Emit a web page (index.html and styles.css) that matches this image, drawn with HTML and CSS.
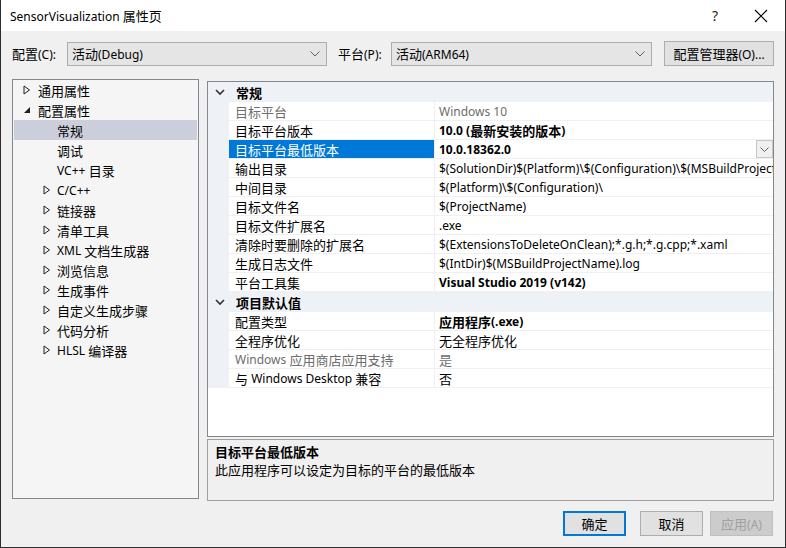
FILE: index.html
```html
<!DOCTYPE html>
<html lang="zh-CN">
<head>
<meta charset="UTF-8">
<title>SensorVisualization 属性页</title>
<link rel="stylesheet" href="styles.css">
</head>
<body>
<div class="window">
    <div class="titlebar">
        <span class="title">SensorVisualization <span class="zh">属性页</span></span>
        <span class="tb-help">?</span>
        <span class="tb-close">
            <svg width="14" height="14" viewBox="0 0 14 14"><path d="M1 1 L13 13 M13 1 L1 13" stroke="#000" stroke-width="1.1" fill="none"/></svg>
        </span>
    </div>

    <div class="toolbar">
        <label class="tb-label"><span class="zh">配置</span>(C):</label>
        <div class="combo combo-config">
            <span class="combo-text"><span class="zh">活动</span>(Debug)</span>
            <svg class="chev" width="10" height="6" viewBox="0 0 10 6"><path d="M0.5 0.5 L5 5 L9.5 0.5" stroke="#606060" fill="none"/></svg>
        </div>
        <label class="tb-label tb-label2"><span class="zh">平台</span>(P):</label>
        <div class="combo combo-platform">
            <span class="combo-text"><span class="zh">活动</span>(ARM64)</span>
            <svg class="chev" width="10" height="6" viewBox="0 0 10 6"><path d="M0.5 0.5 L5 5 L9.5 0.5" stroke="#606060" fill="none"/></svg>
        </div>
        <button class="btn btn-mgr"><span class="zh">配置管理器</span>(O)...</button>
    </div>

    <div class="main">
        <div class="tree">
            <div class="node lvl0"><svg class="tri" width="8" height="10" viewBox="0 0 8 10"><path d="M1 1 L6.5 5 L1 9 Z" fill="none" stroke="#1e1e1e"/></svg><span class="zh">通用属性</span></div>
            <div class="node lvl0"><svg class="tri" width="8" height="10" viewBox="0 0 8 10"><path d="M7 2 L7 8 L1 8 Z" fill="#1e1e1e"/></svg><span class="zh">配置属性</span></div>
            <div class="node lvl1 selected"><span class="zh">常规</span></div>
            <div class="node lvl1"><span class="zh">调试</span></div>
            <div class="node lvl1">VC++ <span class="zh">&nbsp;目录</span></div>
            <div class="node lvl1"><svg class="tri" width="8" height="10" viewBox="0 0 8 10"><path d="M1 1 L6.5 5 L1 9 Z" fill="none" stroke="#1e1e1e"/></svg>C/C++</div>
            <div class="node lvl1"><svg class="tri" width="8" height="10" viewBox="0 0 8 10"><path d="M1 1 L6.5 5 L1 9 Z" fill="none" stroke="#1e1e1e"/></svg><span class="zh">链接器</span></div>
            <div class="node lvl1"><svg class="tri" width="8" height="10" viewBox="0 0 8 10"><path d="M1 1 L6.5 5 L1 9 Z" fill="none" stroke="#1e1e1e"/></svg><span class="zh">清单工具</span></div>
            <div class="node lvl1"><svg class="tri" width="8" height="10" viewBox="0 0 8 10"><path d="M1 1 L6.5 5 L1 9 Z" fill="none" stroke="#1e1e1e"/></svg>XML&nbsp;<span class="zh">文档生成器</span></div>
            <div class="node lvl1"><svg class="tri" width="8" height="10" viewBox="0 0 8 10"><path d="M1 1 L6.5 5 L1 9 Z" fill="none" stroke="#1e1e1e"/></svg><span class="zh">浏览信息</span></div>
            <div class="node lvl1"><svg class="tri" width="8" height="10" viewBox="0 0 8 10"><path d="M1 1 L6.5 5 L1 9 Z" fill="none" stroke="#1e1e1e"/></svg><span class="zh">生成事件</span></div>
            <div class="node lvl1"><svg class="tri" width="8" height="10" viewBox="0 0 8 10"><path d="M1 1 L6.5 5 L1 9 Z" fill="none" stroke="#1e1e1e"/></svg><span class="zh">自定义生成步骤</span></div>
            <div class="node lvl1"><svg class="tri" width="8" height="10" viewBox="0 0 8 10"><path d="M1 1 L6.5 5 L1 9 Z" fill="none" stroke="#1e1e1e"/></svg><span class="zh">代码分析</span></div>
            <div class="node lvl1"><svg class="tri" width="8" height="10" viewBox="0 0 8 10"><path d="M1 1 L6.5 5 L1 9 Z" fill="none" stroke="#1e1e1e"/></svg>HLSL&nbsp;<span class="zh">编译器</span></div>
        </div>

        <div class="right">
            <div class="grid">
                <div class="section">
                    <svg class="sec-chev" width="10" height="7" viewBox="0 0 10 7"><path d="M1 1 L5 5 L9 1" stroke="#333" stroke-width="1.6" fill="none"/></svg>
                    <span class="zh">常规</span>
                </div>
                <div class="row disabled"><div class="gutter"></div><div class="name zh">目标平台</div><div class="val">Windows 10</div></div>
                <div class="row"><div class="gutter"></div><div class="name zh">目标平台版本</div><div class="val bold">10.0 (<span class="zh">最新安装的版本</span>)</div></div>
                <div class="row active"><div class="gutter"></div><div class="name zh">目标平台最低版本</div><div class="val bold">10.0.18362.0
                    <span class="dd"><svg width="9" height="5" viewBox="0 0 9 5"><path d="M0.5 0.5 L4.5 4.5 L8.5 0.5" stroke="#606060" fill="none"/></svg></span></div></div>
                <div class="row"><div class="gutter"></div><div class="name zh">输出目录</div><div class="val">$(SolutionDir)$(Platform)\$(Configuration)\$(MSBuildProjectName)\</div></div>
                <div class="row"><div class="gutter"></div><div class="name zh">中间目录</div><div class="val">$(Platform)\$(Configuration)\</div></div>
                <div class="row"><div class="gutter"></div><div class="name zh">目标文件名</div><div class="val">$(ProjectName)</div></div>
                <div class="row"><div class="gutter"></div><div class="name zh">目标文件扩展名</div><div class="val">.exe</div></div>
                <div class="row"><div class="gutter"></div><div class="name zh">清除时要删除的扩展名</div><div class="val">$(ExtensionsToDeleteOnClean);*.g.h;*.g.cpp;*.xaml</div></div>
                <div class="row"><div class="gutter"></div><div class="name zh">生成日志文件</div><div class="val">$(IntDir)$(MSBuildProjectName).log</div></div>
                <div class="row"><div class="gutter"></div><div class="name zh">平台工具集</div><div class="val bold">Visual Studio 2019 (v142)</div></div>
                <div class="section">
                    <svg class="sec-chev" width="10" height="7" viewBox="0 0 10 7"><path d="M1 1 L5 5 L9 1" stroke="#333" stroke-width="1.6" fill="none"/></svg>
                    <span class="zh">项目默认值</span>
                </div>
                <div class="row"><div class="gutter"></div><div class="name zh">配置类型</div><div class="val bold"><span class="zh">应用程序</span>(.exe)</div></div>
                <div class="row"><div class="gutter"></div><div class="name zh">全程序优化</div><div class="val zh">无全程序优化</div></div>
                <div class="row disabled"><div class="gutter"></div><div class="name">Windows&nbsp;<span class="zh">应用商店应用支持</span></div><div class="val zh">是</div></div>
                <div class="row"><div class="gutter"></div><div class="name"><span class="zh">与</span>&nbsp;Windows Desktop&nbsp;<span class="zh">兼容</span></div><div class="val zh">否</div></div>
            </div>
            <div class="desc">
                <div class="desc-title zh">目标平台最低版本</div>
                <div class="desc-text zh">此应用程序可以设定为目标的平台的最低版本</div>
            </div>
        </div>
    </div>

    <div class="footer">
        <button class="btn btn-ok"><span class="zh">确定</span></button>
        <button class="btn"><span class="zh">取消</span></button>
        <button class="btn btn-off"><span class="zh">应用</span>(A)</button>
    </div>
</div>
</body>
</html>
```

FILE: styles.css
```css
body {
    margin: 0;
    padding: 0;
    font-family: "Segoe UI", "Noto Sans", "Noto Sans CJK SC", sans-serif;
    font-size: 12px;
    color: #000;
    background-color: #f0f0f0;
}
/* Chinese glyphs render a bit larger than the Latin text */
.zh {
    font-size: 13px;
}
.window {
    width: 786px;
    height: 548px;
    box-sizing: border-box;
    border: 1px solid #2e2e2e;
    border-top: none;
    background-color: #f0f0f0;
    display: flex;
    flex-direction: column;
}
.titlebar {
    height: 31px;
    flex: none;
    background-color: #fff;
    display: flex;
    align-items: center;
    padding-left: 9px;
}
.title {
    flex: 1;
    font-size: 12px;
}
.tb-help {
    width: 46px;
    text-align: center;
    font-size: 14px;
    color: #222;
}
.tb-close {
    width: 46px;
    display: flex;
    justify-content: center;
    margin-right: 1px;
}
.toolbar {
    height: 48px;
    flex: none;
    display: flex;
    align-items: center;
    padding: 0 0 3px 11px;
    box-sizing: border-box;
}
.tb-label {
    width: 55px;
    flex: none;
}
.tb-label2 {
    width: 53px;
    margin-left: 11px;
}
.combo {
    height: 24px;
    flex: none;
    box-sizing: border-box;
    border: 1px solid #adadad;
    background-color: #e5e5e5;
    display: flex;
    align-items: center;
    padding: 0 6px 0 4px;
}
.combo-text {
    flex: 1;
}
.combo-config {
    width: 260px;
}
.combo-platform {
    width: 261px;
}
.btn {
    font-family: inherit;
    font-size: 12px;
    height: 25px;
    width: 63px;
    flex: none;
    border: 1px solid #adadad;
    background-color: #e1e1e1;
    color: #000;
    padding: 0;
}
.btn-mgr {
    width: 110px;
    margin-left: 12px;
}
.btn-ok {
    border: 2px solid #0078d7;
}
.btn-off {
    background-color: #cccccc;
    border-color: #bfbfbf;
    color: #a0a0a0;
}
.main {
    flex: 1;
    display: flex;
    padding: 0 11px 0 11px;
    gap: 8px;
}
.tree {
    width: 187px;
    flex: none;
    height: 420px;
    box-sizing: border-box;
    border: 1px solid #828790;
    background-color: #f5f5f5;
    padding: 0 1px;
}
.node {
    height: 20px;
    display: flex;
    align-items: center;
    white-space: nowrap;
    position: relative;
}
.node .tri {
    position: absolute;
    top: 5px;
}
.lvl0 {
    padding-left: 24px;
}
.lvl0 .tri {
    left: 9px;
}
.lvl1 {
    padding-left: 43px;
}
.lvl1 .tri {
    left: 29px;
}
.selected {
    background-color: #cccedb;
}
.right {
    flex: 1;
    min-width: 0;
    display: flex;
    flex-direction: column;
    padding-top: 2px;
    gap: 2px;
}
.grid {
    height: 356px;
    box-sizing: border-box;
    border: 1px solid #828790;
    background-color: #fff;
}
.section {
    height: 20px;
    background-color: #eef1f6;
    display: flex;
    align-items: center;
    font-weight: bold;
}
.sec-chev {
    margin-left: 7px;
    margin-right: 11px;
}
.row {
    height: 19px;
    display: flex;
    box-sizing: border-box;
    border-bottom: 1px solid #f0f0f3;
}
.gutter {
    width: 21px;
    flex: none;
    background-color: #eef1f6;
}
.name {
    width: 206px;
    flex: none;
    box-sizing: border-box;
    padding-left: 6px;
    border-right: 1px solid #f0f0f3;
    display: flex;
    align-items: center;
    white-space: nowrap;
    overflow: hidden;
}
.val {
    flex: 1;
    min-width: 0;
    padding-left: 4px;
    display: flex;
    align-items: center;
    white-space: nowrap;
    overflow: hidden;
    position: relative;
}
.bold {
    font-weight: bold;
}
.disabled .name,
.disabled .val {
    color: #6d6d6d;
}
.active .name {
    background-color: #0078d7;
    color: #fff;
}
.dd {
    position: absolute;
    right: 0;
    top: 0;
    width: 17px;
    height: 18px;
    box-sizing: border-box;
    border: 1px solid #c6c6c6;
    background-color: #f0f0f0;
    display: flex;
    align-items: center;
    justify-content: center;
}
.desc {
    height: 62px;
    box-sizing: border-box;
    border: 1px solid #a0a0a0;
    padding: 3px 7px;
    line-height: 18px;
}
.desc-title {
    font-weight: bold;
}
.footer {
    height: 49px;
    flex: none;
    display: flex;
    justify-content: flex-end;
    align-items: flex-start;
    gap: 14px;
    padding: 10px 12px 0 0;
    box-sizing: border-box;
}
.footer .btn-off {
    margin-left: -7px;
}
```
